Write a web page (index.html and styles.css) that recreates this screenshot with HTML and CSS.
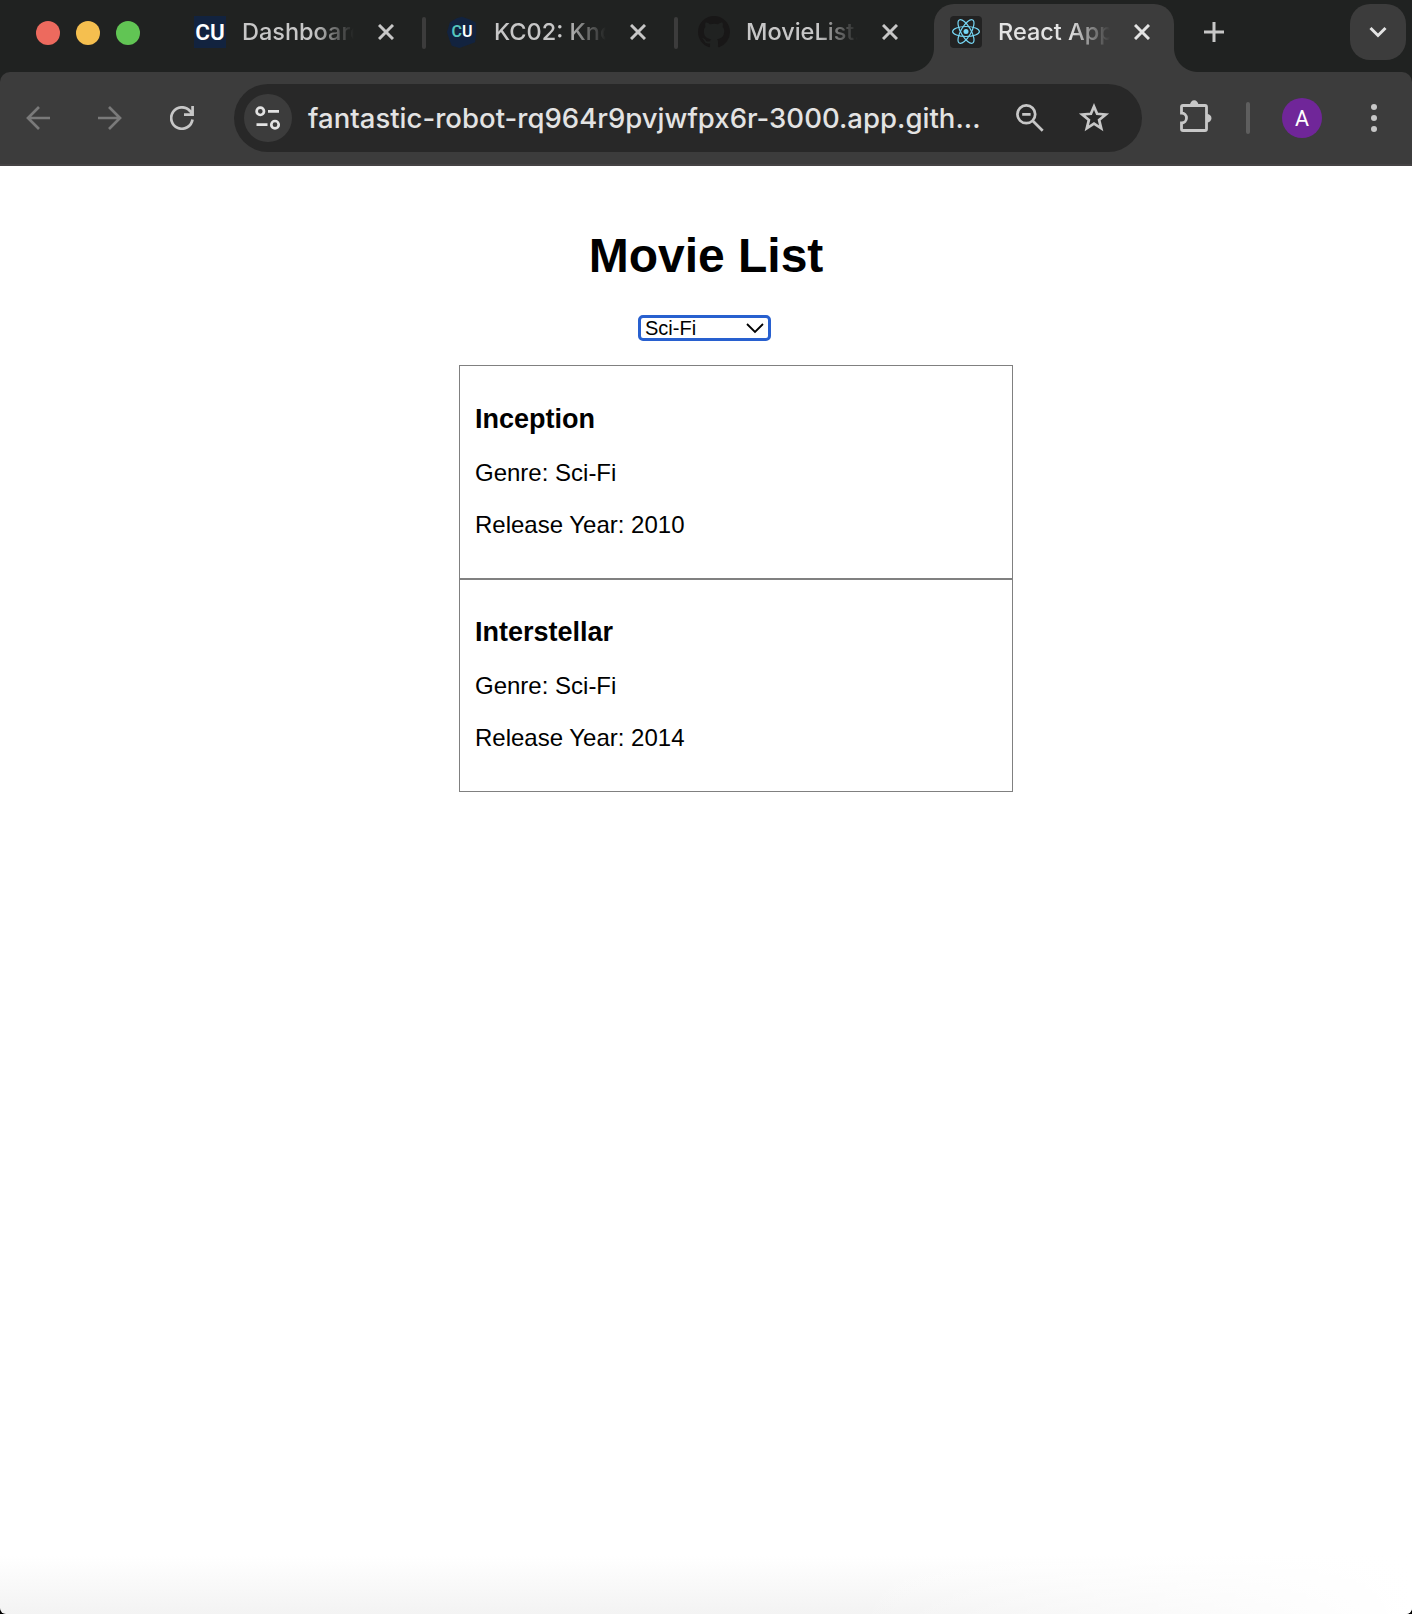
FILE: index.html
```html
<!DOCTYPE html>
<html lang="en">
<head>
<meta charset="utf-8">
<title>React App</title>
<link rel="stylesheet" href="styles.css">
</head>
<body>
<div class="window">
  <header class="tabstrip">
    <div class="lights"><i class="light red"></i><i class="light yellow"></i><i class="light green"></i></div>
    <div class="tabs">
      <div class="tab">
        <span class="favicon navy">CU</span>
        <span class="title">Dashboard</span>
        <svg class="close" viewBox="0 0 16 16"><path d="M1 1l14 14M15 1L1 15"/></svg>
      </div>
      <i class="sep"></i>
      <div class="tab">
        <span class="favicon hex"><b>C</b>U</span>
        <span class="title">KC02: Kno</span>
        <svg class="close" viewBox="0 0 16 16"><path d="M1 1l14 14M15 1L1 15"/></svg>
      </div>
      <i class="sep"></i>
      <div class="tab">
        <svg class="favicon" viewBox="0 0 16 16"><path fill="#181717" d="M8 0C3.58 0 0 3.58 0 8c0 3.54 2.29 6.53 5.47 7.59.4.07.55-.17.55-.38 0-.19-.01-.82-.01-1.49-2.01.37-2.53-.49-2.69-.94-.09-.23-.48-.94-.82-1.13-.28-.15-.68-.52-.01-.53.63-.01 1.08.58 1.23.82.72 1.21 1.87.87 2.33.66.07-.52.28-.87.51-1.07-1.78-.2-3.64-.89-3.64-3.95 0-.87.31-1.59.82-2.15-.08-.2-.36-1.02.08-2.12 0 0 .67-.21 2.2.82.64-.18 1.32-.27 2-.27s1.36.09 2 .27c1.53-1.04 2.2-.82 2.2-.82.44 1.1.16 1.92.08 2.12.51.56.82 1.27.82 2.15 0 3.07-1.87 3.75-3.65 3.95.29.25.54.73.54 1.48 0 1.07-.01 1.93-.01 2.2 0 .21.15.46.55.38A8.01 8.01 0 0 0 16 8c0-4.42-3.58-8-8-8z"/></svg>
        <span class="title">MovieList.</span>
        <svg class="close" viewBox="0 0 16 16"><path d="M1 1l14 14M15 1L1 15"/></svg>
      </div>
      <div class="tab active">
        <svg class="favicon" viewBox="0 0 32 32"><rect width="32" height="32" rx="4" fill="#222"/><g fill="none" stroke="#76d7f5" stroke-width="1.2"><ellipse cx="16" cy="15.5" rx="13.4" ry="5"/><ellipse cx="16" cy="15.5" rx="13.4" ry="5" transform="rotate(60 16 15.5)"/><ellipse cx="16" cy="15.5" rx="13.4" ry="5" transform="rotate(120 16 15.5)"/></g><circle cx="16" cy="15.5" r="2.5" fill="#76d7f5"/></svg>
        <span class="title">React App</span>
        <svg class="close" viewBox="0 0 16 16"><path d="M1 1l14 14M15 1L1 15"/></svg>
      </div>
    </div>
    <svg class="plus" viewBox="0 0 20 20"><path d="M10 0v20M0 10h20"/></svg>
    <div class="tab-menu"><svg width="18" height="12" viewBox="0 0 18 12"><path d="M1.5 2L9 9.5L16.5 2"/></svg></div>
  </header>

  <nav class="toolbar">
    <svg class="nav dim" viewBox="0 0 24 24"><path d="M24 12H2M13 1L2 12l11 11"/></svg>
    <svg class="nav dim" viewBox="0 0 24 24"><path d="M0 12h22M11 1l11 11-11 11"/></svg>
    <svg class="nav reload" viewBox="0 0 24 24"><path d="M22.5 13.5A10.7 10.7 0 1 1 20 5L22 7.5M22.6 0v8.6H14"/></svg>
    <div class="omnibox">
      <span class="site"><svg width="26" height="24" viewBox="0 0 26 24"><circle cx="5.3" cy="5.3" r="3.7"/><circle cx="20" cy="18.7" r="3.7"/><path d="M13 5.3h11M1.5 18.7h11"/></svg></span>
      <span class="url">fantastic-robot-rq964r9pvjwfpx6r-3000.app.gith...</span>
      <svg class="mag" viewBox="0 0 28 28"><circle cx="10.3" cy="10.3" r="8.9"/><path d="M16.7 16.7l10 10M6.2 10.3h8.4"/></svg>
      <svg class="star" viewBox="0 0 32 32"><path d="M16 4.4l3.1 7.4 8.6.7-6.6 5.4 2.1 8.4-7.2-4.6-7.2 4.6 2.1-8.4-6.6-5.4 8.6-.7z"/></svg>
    </div>
    <svg class="puzzle" viewBox="0 0 32 32"><path class="body" d="M3 5.5h22q1.5 0 1.5 1.5v22q0 1.5-1.5 1.5H3q-1.5 0-1.5-1.5v-6a5 5 0 0 0 0-10V7Q1.5 5.5 3 5.5z"/><path class="knob" d="M10 5a4.2 4.7 0 0 1 8.4 0zM27 14a4.5 4.2 0 0 1 0 8.4z"/></svg>
    <i class="divider"></i>
    <span class="avatar">A</span>
    <svg class="dots" viewBox="0 0 6 28"><circle cx="3" cy="3" r="3"/><circle cx="3" cy="14" r="3"/><circle cx="3" cy="25" r="3"/></svg>
  </nav>

  <main class="page">
    <h1>Movie List</h1>
    <div class="picker">
      <select><option>Sci-Fi</option></select>
      <svg width="18" height="11" viewBox="0 0 18 11"><path d="M1 1l8 8 8-8"/></svg>
    </div>
    <section class="movies">
      <article><h3>Inception</h3><p>Genre: Sci-Fi</p><p>Release Year: 2010</p></article>
      <article><h3>Interstellar</h3><p>Genre: Sci-Fi</p><p>Release Year: 2014</p></article>
    </section>
  </main>
</div>
</body>
</html>
```
FILE: styles.css
```css
* { box-sizing: border-box; }
html { background: #000; }
body { margin: 0; }
svg { display: block; flex: none; fill: none; }
i { display: block; flex: none; }

.window {
  width: 1412px;
  height: 1614px;
  display: flex;
  flex-direction: column;
  overflow: hidden;
  border-radius: 0 0 6px 6px;
  background: #202221;
  font-family: Inter, sans-serif;
}

/* Tab strip */
.tabstrip {
  height: 72px;
  flex: none;
  display: flex;
  align-items: flex-start;
  padding: 4px 6px 0 36px;
}
.lights { display: flex; gap: 16px; padding-top: 17px; width: 142px; }
.light { width: 24px; height: 24px; border-radius: 50%; }
.red { background: #ed6a5e; }
.yellow { background: #f5bf4f; }
.green { background: #61c554; }

.tabs { display: flex; }
.tab {
  position: relative;
  width: 240px;
  height: 68px;
  display: flex;
  align-items: center;
  padding: 0 24px 12px 16px;
  color: #c7c7c7;
}
.active {
  margin-left: 12px;
  background: #3c3c3c;
  border-radius: 20px 20px 0 0;
  color: #e3e3e3;
}
.active::before, .active::after {
  content: "";
  position: absolute;
  bottom: 0;
  width: 24px;
  height: 24px;
}
.active::before { right: 100%; background: radial-gradient(circle at 0 0, transparent 23.5px, #3c3c3c 24.5px); }
.active::after { left: 100%; background: radial-gradient(circle at 100% 0, transparent 23.5px, #3c3c3c 24.5px); }
.sep { width: 4px; height: 32px; margin: 13px 4px 0; border-radius: 2px; background: #3c3c3c; }

.favicon { width: 32px; height: 32px; flex: none; }
.navy, .hex { display: flex; align-items: center; justify-content: center; color: #fff; }
.navy { background: #12233f; font: 600 22.5px/32px Roboto, sans-serif; }
.hex {
  background: #12233f;
  font: 600 16px/32px Roboto, sans-serif;
  clip-path: polygon(50% 2%, 72% 10%, 93% 20%, 95% 50%, 91% 82%, 68% 91%, 42% 100%, 18% 93%, 10% 73%, 3% 50%, 12% 20%, 33% 7%);
}
.hex b { color: #55c5bd; font-weight: 600; }
.title {
  width: 112px;
  margin-left: 16px;
  white-space: nowrap;
  font-size: 23.5px;
  font-weight: 450;
  line-height: 32px;
  -webkit-mask-image: linear-gradient(90deg, #000 72px, transparent 112px);
  mask-image: linear-gradient(90deg, #000 72px, transparent 112px);
}
.close { width: 16px; height: 16px; margin-left: auto; stroke: currentColor; stroke-width: 3; }
.plus { width: 20px; height: 20px; margin: 18px 0 0 30px; stroke: #c7c7c7; stroke-width: 3; }
.tab-menu {
  width: 56px;
  height: 56px;
  margin-left: auto;
  border-radius: 20px;
  background: #3c3c3c;
  display: flex;
  align-items: center;
  justify-content: center;
  stroke: #e3e3e3;
  stroke-width: 3;
}

/* Toolbar */
.toolbar {
  height: 94px;
  flex: none;
  display: flex;
  align-items: center;
  padding: 0 35px 0 26px;
  background: #3c3c3c;
  border-bottom: 2px solid #454344;
  border-radius: 10px 10px 0 0;
}
.nav { width: 24px; height: 24px; margin-right: 48px; stroke: #c7c7c7; stroke-width: 2.7; }
.dim { stroke: #7a7a7a; }
.reload { margin-right: 40px; }
.omnibox {
  width: 908px;
  height: 68px;
  display: flex;
  align-items: center;
  padding: 0 32px 0 10px;
  border-radius: 34px;
  background: #282828;
  stroke: #c7c7c7;
  stroke-width: 2.7;
}
.site {
  width: 48px;
  height: 48px;
  border-radius: 50%;
  background: #3c3c3c;
  display: flex;
  align-items: center;
  justify-content: center;
  stroke: #e3e3e3;
}
.url { width: 692px; margin-left: 16px; white-space: nowrap; font-size: 27.5px; font-weight: 450; letter-spacing: .03px; line-height: 40px; color: #e3e3e3; }
.mag { width: 28px; height: 28px; margin-left: 16px; }
.star { width: 32px; height: 32px; margin-left: auto; }
.puzzle { width: 32px; height: 32px; margin: -4px 0 0 38px; }
.body { stroke: #c7c7c7; stroke-width: 2.8; }
.knob { fill: #c7c7c7; }
.divider { width: 4px; height: 32px; margin-left: 34px; border-radius: 2px; background: #5e5e5e; }
.avatar {
  width: 40px;
  height: 40px;
  margin-left: 32px;
  border-radius: 50%;
  background: #702699;
  color: #fff;
  text-align: center;
  font: 21.5px/41px Roboto, sans-serif;
}
.dots { width: 6px; height: 28px; margin-left: auto; fill: #c7c7c7; }

/* Page */
.page {
  flex: 1;
  display: flex;
  flex-direction: column;
  align-items: center;
  padding-top: 62px;
  background: linear-gradient(90deg, transparent 60%, #fff 100%), linear-gradient(#fff 1390px, #f3f3f3 1448px);
  color: #000;
  font-family: "Liberation Sans", Arial, sans-serif;
}
h1 { margin: 0; font-size: 48px; line-height: 55px; }
.picker {
  width: 133px;
  height: 27px;
  margin: 32px 3px 0 0;
  display: grid;
  align-items: center;
}
.picker > * { grid-area: 1 / 1; }
.picker select {
  appearance: none;
  width: 133px;
  height: 26px;
  margin: 0 0 1px;
  padding: 0 0 0 4px;
  border: 3px solid #2860cf;
  border-radius: 5px;
  outline: 0;
  background: #fff;
  color: #000;
  font: 20px/20px "Liberation Sans", Arial, sans-serif;
}
.picker svg { justify-self: end; margin-right: 7px; stroke: #000; stroke-width: 1.8; pointer-events: none; }
.movies { width: 554px; margin: 23px 0 0 60px; }
article { height: 213px; padding: 37px 15px 0; border: 1px solid #808080; }
article:first-child { height: 214px; padding-top: 38px; }
h3 { margin: 0; font-size: 27px; line-height: 31px; }
p { margin: 25px 0 0; font-size: 24px; line-height: 27px; }
h3 + p { margin-top: 24px; }
```
